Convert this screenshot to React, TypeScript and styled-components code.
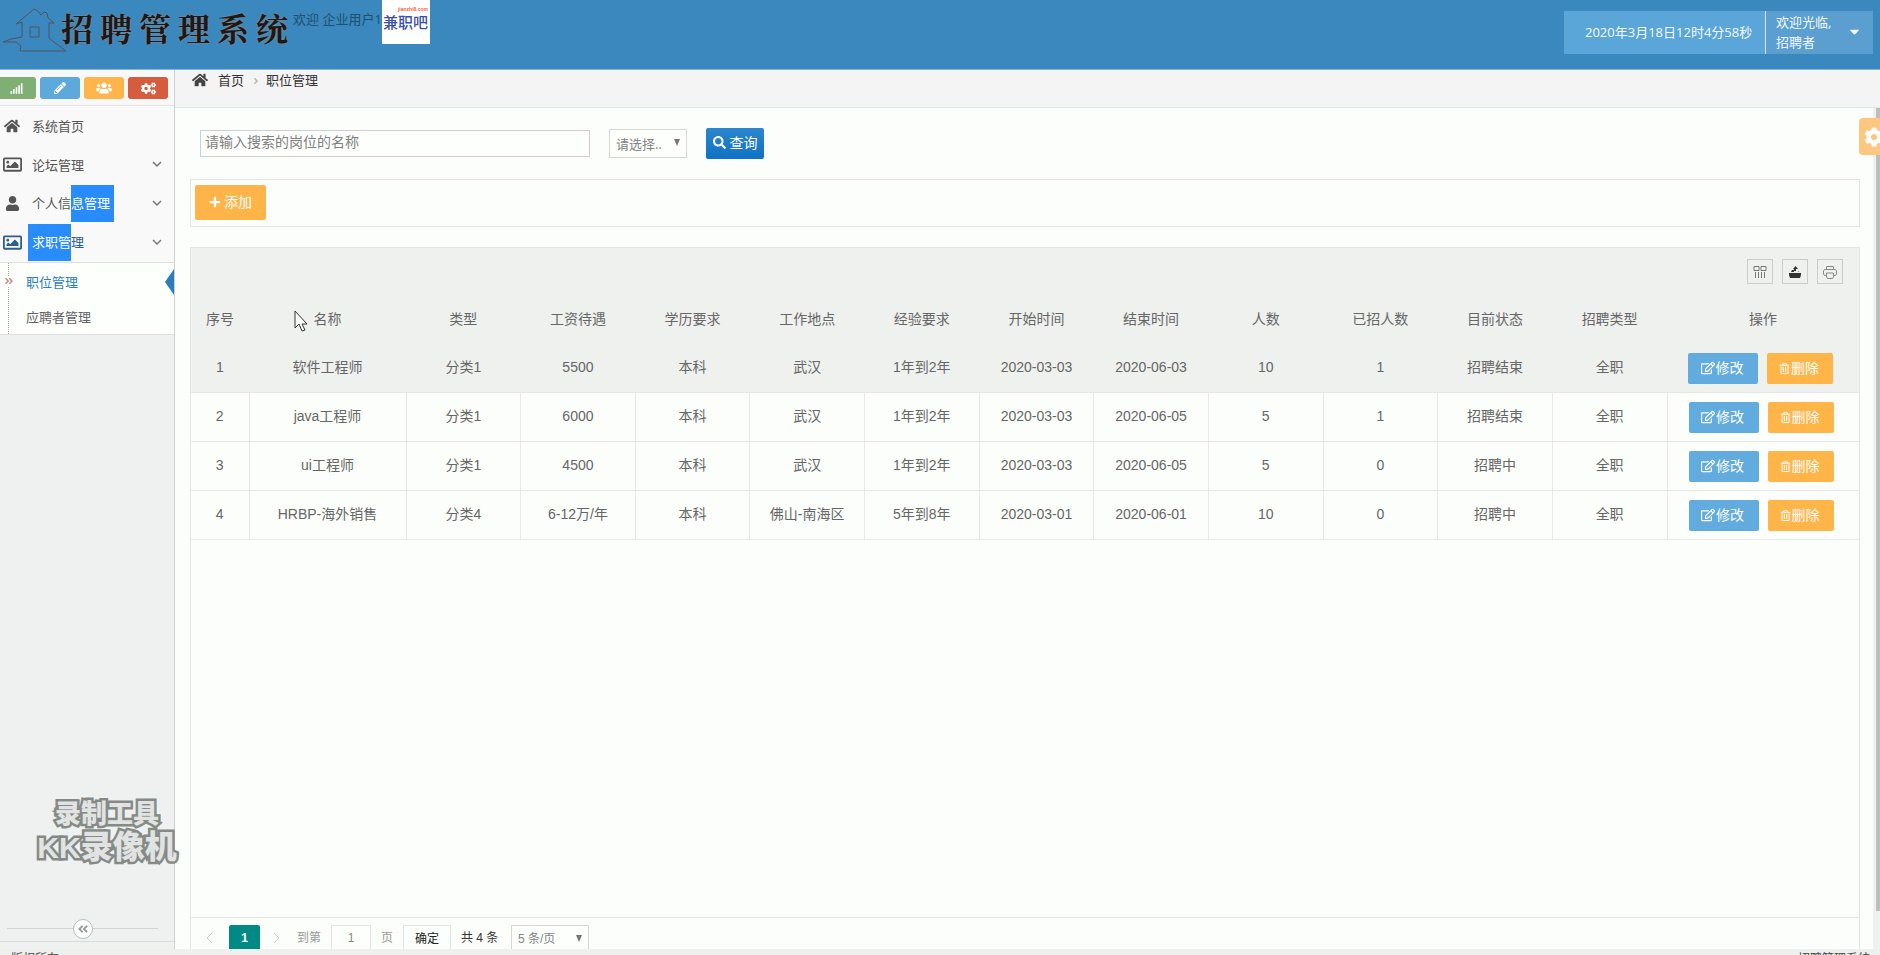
import React from 'react';
import styled, { createGlobalStyle, css } from 'styled-components';
import {
  FaSignal, FaPencilAlt, FaUsers, FaCogs, FaHome, FaRegImage, FaUser, FaRegEdit,
  FaRegTrashAlt, FaPlus, FaSearch, FaAngleDoubleLeft, FaAngleDoubleRight,
  FaAngleRight, FaCaretDown, FaCog,
} from 'react-icons/fa';

const Global = createGlobalStyle`
  * { box-sizing: border-box; }
  body {
    margin: 0;
    background: #fcfefb;
    color: #555;
    font: 13px/20px "Open Sans", "Noto Sans CJK SC", sans-serif;
  }
  button, input, select { font: inherit; margin: 0; }
  svg { flex: none; }
`;

const Page = styled.div`
  position: relative;
  display: flex;
  flex-direction: column;
  height: 100vh;
  overflow: hidden;
`;

const Header = styled.header`
  display: flex;
  flex: none;
  height: 70px;
  background: #3a88bd;
  border-bottom: 1px solid #86b7db;
`;

const Brand = styled.h1`
  display: flex;
  align-items: flex-start;
  gap: 7px;
  width: 293px;
  margin: 0;
  padding-left: 2px;
  font: 700 32px/54px "Noto Serif CJK SC", "Noto Sans CJK SC", sans-serif;
  color: #1d1717;
  text-shadow: 0 0 2px #b09078;
`;

const House = styled.svg`
  width: 66px;
  height: 56px;
  margin-right: -14px;
`;

const Welcome = styled.span`
  padding-top: 9px;
  width: 89px;
  color: #20506f;
  white-space: nowrap;
`;

const Avatar = styled.svg`
  width: 48px;
  height: 44px;
  background: #fff;
`;

const HeaderRight = styled.div`
  display: flex;
  height: 43px;
  margin: 11px 7px 0 auto;
  color: #f4faff;
`;

const Clock = styled.time`
  width: 202px;
  padding-left: 21px;
  line-height: 43px;
  background: #5aa6d9;
  border-right: 1px solid #d9e9f4;
  white-space: nowrap;
`;

const UserMenu = styled.button`
  display: flex;
  align-items: center;
  justify-content: space-between;
  width: 107px;
  padding: 0 11px 2px 10px;
  border: 0;
  background: #5b9fd1;
  color: inherit;
  text-align: left;
`;

const Body = styled.div`
  display: flex;
  flex: 1;
  min-height: 0;
`;

const Sidebar = styled.aside`
  display: flex;
  flex-direction: column;
  flex: none;
  width: 175px;
  background: #eef1f0;
  border-right: 1px solid #ccd0ce;
`;

const Shortcuts = styled.div`
  display: flex;
  gap: 4px;
  height: 36px;
  padding-top: 7px;
  margin-left: -4px;
  background: #f7f8f7;
  border-bottom: 1px solid #e2e5e3;
`;

const Shortcut = styled.button<{ $bg: string }>`
  display: flex;
  align-items: center;
  justify-content: center;
  width: 40px;
  height: 22px;
  padding: 0;
  border: 0;
  border-radius: 3px;
  background: ${(p) => p.$bg};
  color: #fff;
`;

const Menu = styled.ul`
  margin: 0;
  padding: 0;
  list-style: none;
`;

const MenuLink = styled.a<{ $open?: boolean }>`
  display: flex;
  align-items: center;
  height: 39px;
  padding-right: 11px;
  background: #f8f9f8;
  color: ${(p) => (p.$open ? '#2c5f8e' : '#555')};
  text-decoration: none;
`;

const IconSlot = styled.span`
  display: flex;
  justify-content: center;
  flex: none;
  width: 24px;
  margin-right: 8px;
`;

const Chevron = styled.svg`
  width: 12px;
  height: 8px;
  margin-left: auto;
`;

const Marked = styled.span<{ $side: 'left' | 'right' }>`
  display: inline-block;
  line-height: 37px;
  background: #288cff;
  color: #fff;
  ${(p) => (p.$side === 'left'
    ? css`padding-left: 4px; margin-left: -4px;`
    : css`padding-right: 4px;`)}
`;

const SubMenu = styled.ul`
  position: relative;
  height: 73px;
  margin: 0;
  padding: 2px 0 0;
  list-style: none;
  background: #fdfffd;
  border-top: 1px solid #dde1e0;
  border-bottom: 1px solid #dde1e0;
  &::before {
    content: '';
    position: absolute;
    top: 0;
    bottom: 0;
    left: 8px;
    border-left: 1px dotted #aaa;
  }
`;

const SubLink = styled.a<{ $active?: boolean }>`
  position: relative;
  display: block;
  height: 35px;
  padding-left: 26px;
  line-height: 34px;
  color: ${(p) => (p.$active ? '#2b7dbc' : '#616161')};
  text-decoration: none;
  svg { position: absolute; left: 4px; top: 11px; color: #d08a8a; background: #fdfffd; }
  ${(p) => p.$active && css`
    &::after {
      content: '';
      position: absolute;
      right: 0;
      top: 4px;
      border: solid transparent;
      border-width: 13px 9px 13px 0;
      border-right-color: #2b7dbc;
    }
  `}
`;

const CollapseBar = styled.div`
  display: flex;
  align-items: center;
  height: 26px;
  margin-top: auto;
  margin-bottom: 7px;
  padding: 0 16px 0 7px;
  border-bottom: 1px solid #d9dddb;
  &::before, &::after {
    content: '';
    flex: 1;
    border-top: 1px solid #d0d4d2;
  }
`;

const CollapseButton = styled.button`
  display: flex;
  align-items: center;
  justify-content: center;
  width: 20px;
  height: 20px;
  padding: 0;
  border: 1px solid #bbb;
  border-radius: 50%;
  background: #fff;
  color: #999;
`;

const Main = styled.main`
  display: flex;
  flex-direction: column;
  flex: 1;
  min-width: 0;
`;

const Breadcrumb = styled.nav`
  display: flex;
  flex: none;
  height: 38px;
  padding: 0 17px;
  background: #f3f4f3;
  border-bottom: 1px solid #e3e6e4;
  color: #333;
  line-height: 20px;
  a { color: #333; text-decoration: none; margin: 0 7px 0 10px; }
  > svg { margin-top: 2px; color: #444; }
  > svg:not(:first-child) { margin: 6px 5px 0 0; color: #b5b9b7; }
`;

const Scroller = styled.div`
  display: flex;
  flex: 1;
  min-height: 0;
`;

const Content = styled.div`
  display: flex;
  flex-direction: column;
  flex: 1;
  gap: 20px;
  min-width: 0;
  padding: 20px 13px 0 15px;
`;

const ScrollTrack = styled.div`
  width: 7px;
  padding: 0 0 38px 3px;
  background: #eff1ef;
`;

const ScrollThumb = styled.div`
  height: 100%;
  background: #bdbfbd;
`;

const SearchRow = styled.form`
  display: flex;
  align-items: center;
  gap: 19px;
  flex: none;
  height: 31px;
  padding-left: 10px;
`;

const SearchInput = styled.input`
  width: 390px;
  height: 27px;
  padding: 0 4px 4px;
  border: 1px solid #cdd1ce;
  background: #fdfffd;
  color: #777;
  font-size: 14px;
  line-height: 20px;
  &::placeholder { color: #808080; opacity: 1; }
`;

const SelectBox = styled.span<{ $w: number; $h: number }>`
  position: relative;
  width: ${(p) => p.$w}px;
  height: ${(p) => p.$h}px;
  svg { position: absolute; right: 6px; top: 10px; pointer-events: none; }
  select {
    appearance: none;
    width: 100%;
    height: 100%;
    padding: 0 20px 0 6px;
    border: 1px solid #d5d8d5;
    border-radius: 0;
    background: #fdfffd;
    color: #848484;
  }
`;

const SearchButton = styled.button`
  display: flex;
  align-items: center;
  justify-content: center;
  gap: 4px;
  width: 58px;
  height: 31px;
  padding: 0 0 2px;
  border: 0;
  border-radius: 2px;
  background: linear-gradient(#2b86cc, #0f72c4);
  color: #fff;
  font-size: 14px;
`;

const ActionBar = styled.div`
  flex: none;
  height: 48px;
  padding: 5px 4px;
  border: 1px solid #e3e7e4;
`;

const AddButton = styled.button`
  display: flex;
  align-items: center;
  justify-content: center;
  gap: 3px;
  width: 71px;
  height: 35px;
  padding: 0 0 2px;
  border: 0;
  border-radius: 2px;
  background: #ffb44a;
  color: #fff;
  font-size: 14px;
`;

const Panel = styled.section`
  display: flex;
  flex-direction: column;
  flex: 1;
  min-height: 0;
  border: solid #e3e6e4;
  border-width: 1px 1px 0;
  overflow: hidden;
`;

const Tools = styled.div`
  display: flex;
  justify-content: flex-end;
  gap: 9px;
  flex: none;
  height: 47px;
  padding: 11px 16px 0;
  background: #eff1ef;
`;

const ToolButton = styled.button`
  display: flex;
  align-items: center;
  justify-content: center;
  width: 26px;
  height: 25px;
  padding: 0;
  border: 1px solid #c9ccca;
  background: transparent;
`;

const Table = styled.table`
  width: 100%;
  table-layout: fixed;
  border-collapse: collapse;
  color: #666;
  font: 14px/20px "Liberation Sans", "Noto Sans CJK SC", sans-serif;
  th, td { height: 49px; padding: 0 0 2px; text-align: center; font-weight: 400; }
  tbody tr:first-child td { height: 48px; }
  thead, tbody tr:first-child { background: #eff1ef; }
  tbody tr { border-bottom: 1px solid #e5e8e6; }
  tbody tr:not(:first-child) td:not(:last-child) { border-right: 1px solid #e5e8e6; }
`;

const IndexCol = styled.col`width: 58px;`;
const NameCol = styled.col`width: 157px;`;
const ActionsCol = styled.col`width: 192px;`;

const RowActions = styled.div`
  display: flex;
  gap: 9px;
  padding: 3px 0 0 21px;
`;

const RowButton = styled.button<{ $kind: 'edit' | 'delete' }>`
  display: flex;
  align-items: center;
  justify-content: center;
  gap: 1px;
  width: ${(p) => (p.$kind === 'edit' ? 70 : 66)}px;
  height: 31px;
  padding: 0 2px 0 0;
  border: 0;
  border-radius: 2px;
  background: ${(p) => (p.$kind === 'edit' ? '#61abdf' : '#ffb548')};
  color: #fff;
`;

const Pager = styled.nav`
  display: flex;
  align-items: flex-start;
  flex: none;
  gap: 10px;
  height: 32px;
  margin-top: auto;
  padding: 7px 14px 0;
  border-top: 1px solid #e3e6e4;
  overflow: hidden;
  color: #999;
  font: 12px/26px "Liberation Sans", "Noto Sans CJK SC", sans-serif;
  white-space: nowrap;
`;

const PagerArrow = styled.button`
  display: flex;
  align-items: center;
  width: 14px;
  height: 26px;
  padding: 0;
  border: 0;
  background: none;
`;

const CurrentPage = styled.button`
  width: 31px;
  height: 26px;
  margin-right: 3px;
  padding: 0;
  border: 0;
  border-radius: 2px 2px 0 0;
  background: #008a86;
  color: #fff;
  font-weight: 700;
`;

const PageInput = styled.input`
  width: 40px;
  height: 28px;
  padding: 0 0 2px;
  border: 1px solid #e2e5e3;
  background: #fdfffd;
  color: #888;
  text-align: center;
`;

const ConfirmButton = styled.button`
  width: 48px;
  height: 28px;
  padding: 0 0 2px;
  border: 1px solid #e2e5e3;
  background: #fdfffd;
  color: #222;
`;

const Total = styled.span`
  width: 40px;
  color: #333;
`;

const Footer = styled.footer`
  display: flex;
  justify-content: space-between;
  flex: none;
  height: 6px;
  padding: 4px 10px 0 11px;
  background: #eef0ee;
  font-size: 12px;
  line-height: 12px;
  color: #444;
`;

const Settings = styled.button`
  position: absolute;
  right: -15px;
  top: 118px;
  display: flex;
  align-items: center;
  width: 36px;
  height: 37px;
  padding: 0 0 0 5px;
  border: 0;
  border-radius: 4px;
  background: #ffc680;
  color: #fff;
`;

const Pointer = styled.svg`
  position: absolute;
  left: 294px;
  top: 310px;
`;

const Watermark = styled.div`
  position: absolute;
  left: 36px;
  bottom: 89px;
  width: 142px;
  color: #e0e3e1;
  font: 900 26px/30px "Liberation Sans", "Noto Sans CJK SC", sans-serif;
  text-align: center;
  white-space: nowrap;
  -webkit-text-stroke: 5px #858a87;
  paint-order: stroke fill;
  strong { display: block; font-size: 32px; line-height: 36px; font-weight: 900; }
  small { font-size: 30px; }
`;

const Caret = () => (
  <svg width="8" height="8" viewBox="0 0 8 8" aria-hidden="true"><path d="M1 0h6L4 7z" fill="#777" /></svg>
);

const Down = () => (
  <Chevron viewBox="0 0 12 8" fill="none" stroke="#777" strokeWidth="1.5" aria-hidden="true">
    <path d="M2 1l4 4 4-4" />
  </Chevron>
);

const columns = ['序号', '名称', '类型', '工资待遇', '学历要求', '工作地点', '经验要求', '开始时间', '结束时间', '人数', '已招人数', '目前状态', '招聘类型', '操作'];

const jobs = [
  ['1', '软件工程师', '分类1', '5500', '本科', '武汉', '1年到2年', '2020-03-03', '2020-06-03', '10', '1', '招聘结束', '全职'],
  ['2', 'java工程师', '分类1', '6000', '本科', '武汉', '1年到2年', '2020-03-03', '2020-06-05', '5', '1', '招聘结束', '全职'],
  ['3', 'ui工程师', '分类1', '4500', '本科', '武汉', '1年到2年', '2020-03-03', '2020-06-05', '5', '0', '招聘中', '全职'],
  ['4', 'HRBP-海外销售', '分类4', '6-12万/年', '本科', '佛山-南海区', '5年到8年', '2020-03-01', '2020-06-01', '10', '0', '招聘中', '全职'],
];

export default function App() {
  return (
    <Page>
      <Global />
      <Header>
        <Brand>
          <House viewBox="0 0 66 56" fill="none" stroke="#4f5560" strokeWidth="1" aria-hidden="true">
            <path d="M14 24L32 9l4 2 3 4 3-3 3 1 1 5 6 5-5 0v15l5 4 12 9H18l1-5-5-4-13 0 8-3 11-2V22l-6 2" />
            <path d="M28 27h9v10h-9z" />
          </House>
          {Array.from('招聘管理系统').map((c) => <span key={c}>{c}</span>)}
        </Brand>
        <Welcome>欢迎 企业用户1</Welcome>
        <Avatar viewBox="0 0 48 44">
          <text x="46" y="11" textAnchor="end" fontSize="5" fontWeight="700" fontFamily="Liberation Sans, sans-serif" fill="#f0643c">jianzhi8.com</text>
          <text x="1" y="28" fontSize="15" fontWeight="500" fontFamily="Noto Sans CJK SC, sans-serif" fill="#3b509f">兼职吧</text>
        </Avatar>
        <HeaderRight>
          <Clock>2020年3月18日12时4分58秒</Clock>
          <UserMenu type="button">
            <span>欢迎光临,<br />招聘者</span>
            <FaCaretDown size={15} />
          </UserMenu>
        </HeaderRight>
      </Header>

      <Body>
        <Sidebar>
          <Shortcuts>
            <Shortcut $bg="#7faf72" aria-label="统计"><FaSignal size={13} /></Shortcut>
            <Shortcut $bg="#5ea9dc" aria-label="编辑"><FaPencilAlt size={12} /></Shortcut>
            <Shortcut $bg="#ffb549" aria-label="用户"><FaUsers size={16} /></Shortcut>
            <Shortcut $bg="#d65c3f" aria-label="设置"><FaCogs size={15} /></Shortcut>
          </Shortcuts>
          <Menu>
            <li><MenuLink href="#home"><IconSlot><FaHome size={16} /></IconSlot>系统首页</MenuLink></li>
            <li><MenuLink href="#forum"><IconSlot><FaRegImage size={19} /></IconSlot>论坛管理<Down /></MenuLink></li>
            <li><MenuLink href="#profile"><IconSlot><FaUser size={15} /></IconSlot><span>个人信<Marked $side="right">息管理</Marked></span><Down /></MenuLink></li>
            <li>
              <MenuLink href="#jobs" $open><IconSlot><FaRegImage size={19} /></IconSlot><span><Marked $side="left">求职管</Marked>理</span><Down /></MenuLink>
              <SubMenu>
                <li><SubLink href="#positions" $active><FaAngleDoubleRight size={10} />职位管理</SubLink></li>
                <li><SubLink href="#candidates">应聘者管理</SubLink></li>
              </SubMenu>
            </li>
          </Menu>
          <CollapseBar>
            <CollapseButton type="button" aria-label="收起菜单"><FaAngleDoubleLeft size={12} /></CollapseButton>
          </CollapseBar>
        </Sidebar>

        <Main>
          <Breadcrumb>
            <FaHome size={16} />
            <a href="#home">首页</a>
            <FaAngleRight size={10} />
            <span>职位管理</span>
          </Breadcrumb>
          <Scroller>
            <Content>
              <SearchRow onSubmit={(e) => e.preventDefault()}>
                <SearchInput type="text" aria-label="岗位名称" placeholder="请输入搜索的岗位的名称" />
                <SelectBox $w={78} $h={29}>
                  <select aria-label="类型"><option>请选择..</option></select>
                  <Caret />
                </SelectBox>
                <SearchButton type="submit"><FaSearch size={13} />查询</SearchButton>
              </SearchRow>
              <ActionBar>
                <AddButton type="button"><FaPlus size={12} />添加</AddButton>
              </ActionBar>
              <Panel>
                <Tools>
                  <ToolButton type="button" aria-label="筛选列">
                    <svg width="14" height="14" viewBox="0 0 14 14" fill="none" stroke="#777">
                      <path d="M1 1.500h5v4H1zM8 1.500h5v4H8zM2.500 7v6M5.500 7v6M8.500 7v6M11.500 7v6" />
                    </svg>
                  </ToolButton>
                  <ToolButton type="button" aria-label="导出">
                    <svg width="14" height="14" viewBox="0 0 14 14" fill="#333">
                      <path d="M1 8h12v2l-1 3H2L1 10zM3 7l1-2h2v2h4l1-1v1zM6 6V4H5l2.500-3L10 4H8v2z" />
                    </svg>
                  </ToolButton>
                  <ToolButton type="button" aria-label="打印">
                    <svg width="14" height="14" viewBox="0 0 14 14" fill="none" stroke="#888">
                      <path d="M3.500 4V1.500h7V4M3.500 10.500h-2L.5 9V6l1-1.500h11l1 1.500v3l-1 1.500h-2M3.500 8h7v4l-1 1.500h-5l-1-1.500z" />
                    </svg>
                  </ToolButton>
                </Tools>
                <Table>
                  <colgroup>
                    <IndexCol />
                    <NameCol />
                    {columns.slice(2, -1).map((c) => <col key={c} />)}
                    <ActionsCol />
                  </colgroup>
                  <thead>
                    <tr>{columns.map((c) => <th key={c} scope="col">{c}</th>)}</tr>
                  </thead>
                  <tbody>
                    {jobs.map((job) => (
                      <tr key={job[0]}>
                        {job.map((value, i) => <td key={columns[i]}>{value}</td>)}
                        <td>
                          <RowActions>
                            <RowButton type="button" $kind="edit"><FaRegEdit size={14} />修改</RowButton>
                            <RowButton type="button" $kind="delete"><FaRegTrashAlt size={11} />删除</RowButton>
                          </RowActions>
                        </td>
                      </tr>
                    ))}
                  </tbody>
                </Table>
                <Pager>
                  <PagerArrow type="button" aria-label="上一页">
                    <svg width="8" height="12" viewBox="0 0 8 12" fill="none" stroke="#ccc"><path d="M7 1L2 6l5 5" /></svg>
                  </PagerArrow>
                  <CurrentPage type="button">1</CurrentPage>
                  <PagerArrow type="button" aria-label="下一页">
                    <svg width="8" height="12" viewBox="0 0 8 12" fill="none" stroke="#ccc"><path d="M1 1l5 5-5 5" /></svg>
                  </PagerArrow>
                  <label htmlFor="page">到第</label>
                  <PageInput id="page" type="text" defaultValue="1" />
                  <span>页</span>
                  <ConfirmButton type="button">确定</ConfirmButton>
                  <Total>共 4 条</Total>
                  <SelectBox $w={78} $h={28}>
                    <select aria-label="每页条数"><option>5 条/页</option></select>
                    <Caret />
                  </SelectBox>
                </Pager>
              </Panel>
            </Content>
            <ScrollTrack><ScrollThumb /></ScrollTrack>
          </Scroller>
        </Main>
      </Body>

      <Footer><span>版权所有</span><span>招聘管理系统</span></Footer>

      <Settings type="button" aria-label="页面设置"><FaCog size={20} /></Settings>
      <Watermark>录制工具<strong><small>KK</small>录像机</strong></Watermark>
      <Pointer width="14" height="22" viewBox="0 0 14 22" aria-hidden="true">
        <path d="M1 1v17l4-4 3 7 3-1-3-6h5z" fill="#fff" stroke="#333" />
      </Pointer>
    </Page>
  );
}
